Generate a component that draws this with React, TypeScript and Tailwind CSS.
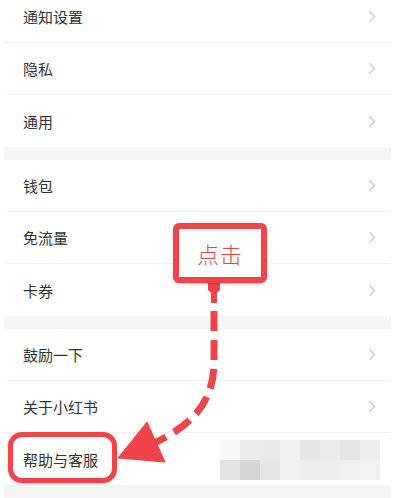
import React from "react";

const Chevron = () => (
  <svg width="8" height="13" viewBox="0 0 8 13" className="shrink-0">
    <polyline points="1.5,1.5 6.5,6.5 1.5,11.5" fill="none" stroke="#c9c9c9" strokeWidth="1.3" strokeLinecap="round" strokeLinejoin="round" />
  </svg>
);

const Row = ({ label, last }: { label: string; last?: boolean }) => (
  <div
    className={
      "h-[52px] flex items-center justify-between pl-[19px] pr-[15px] " +
      (last ? "" : "border-b border-[#f0f0f0]")
    }
  >
    <span className="text-[15px] text-[#333333] leading-none">{label}</span>
    <Chevron />
  </div>
);

const Band = () => <div className="h-[13px] bg-[#f5f5f5]" />;

const cells = [
  "bg-[#f8f8f8]",
  "bg-[#ececec]",
  "bg-[#eaeaea]",
  "bg-[#f0f0f0]",
  "bg-[#e6e6e6]",
  "bg-[#ebebeb]",
  "bg-[#e5e5e5]",
  "bg-[#eeeeee]",
  "bg-[#e3e3e3]",
  "bg-[#d6d6d6]",
  "bg-[#e6e6e6]",
  "bg-[#f0f0f0]",
  "bg-[#eeeeee]",
  "bg-[#eeeeee]",
  "bg-[#f0f0f0]",
  "bg-[#f2f2f2]",
];

export default function App() {
  return (
    <div
      className="relative w-[395px] h-[498px] overflow-hidden bg-white"
      style={{ fontFamily: '"Noto Sans CJK SC", "Noto Sans", sans-serif' }}
    >
      <div className="mt-[-9px] px-[4px]">
        <Row label="通知设置" />
        <Row label="隐私" />
        <Row label="通用" last />
        <Band />
        <Row label="钱包" />
        <Row label="免流量" />
        <Row label="卡券" last />
        <Band />
        <Row label="鼓励一下" />
        <Row label="关于小红书" />
        <Row label="帮助与客服" last />
        <Band />
      </div>

      {/* mosaic */}
      <div className="absolute left-[220px] top-[440px] w-[160px] h-[40px] grid grid-cols-8">
        {cells.map((c, i) => (
          <div key={i} className={"w-[20px] h-[20px] " + c} />
        ))}
      </div>

      {/* annotation arrow */}
      <svg className="absolute left-0 top-0 pointer-events-none" width="395" height="498" viewBox="0 0 395 498">
        <path d="M208 283 L220 283 L220 290 L217 293 L217 303 L211 303 L211 293 L208 290 Z" fill="#f0434b" />
        <path
          d="M214 311 L214 362 C214 398 197 424 150 445"
          fill="none"
          stroke="#f0434b"
          strokeWidth="7"
          strokeDasharray="20 9"
        />
        <polygon points="118,458 147,422 165,462" fill="#f0434b" strokeLinejoin="round" stroke="#f0434b" strokeWidth="1" />
      </svg>

      {/* click label */}
      <div className="absolute left-[173px] top-[223px] w-[94px] h-[60px] border-[6px] border-[#f0434b] rounded-[6px] bg-white flex items-center justify-center shadow-[0_1px_2px_rgba(0,0,0,0.25)]">
        <span className="text-[22px] font-light text-[#e2464e] leading-none tracking-[1px]">点击</span>
      </div>

      {/* ring */}
      <div className="absolute left-[8px] top-[432px] w-[109px] h-[51px] border-[5px] border-[#f0434b] rounded-[14px] shadow-[0_1px_2px_rgba(0,0,0,0.2)]" />
    </div>
  );
}
